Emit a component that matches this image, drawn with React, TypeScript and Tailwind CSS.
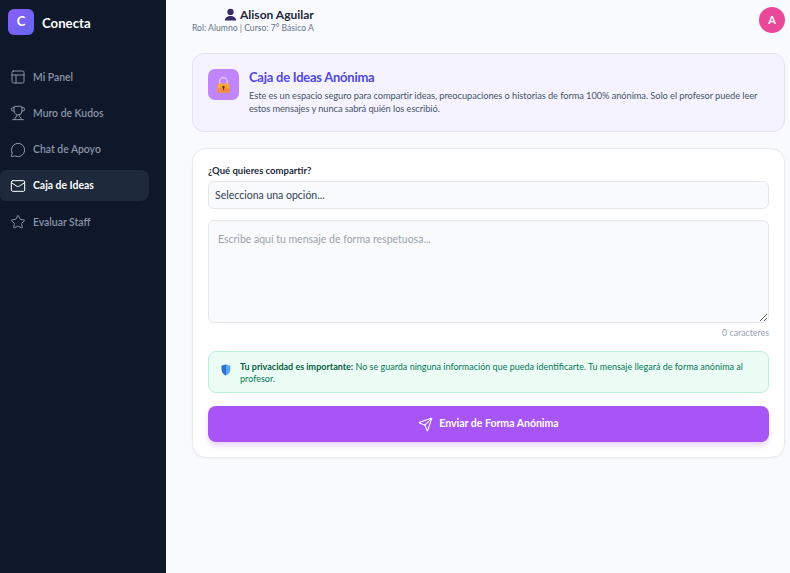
import React from 'react';
import { PanelsTopLeft, Trophy, MessageCircle, Mail, Star, Send } from 'lucide-react';

// --- DATA ---
const navItems = [
  { icon: PanelsTopLeft, label: 'Mi Panel' },
  { icon: Trophy, label: 'Muro de Kudos' },
  { icon: MessageCircle, label: 'Chat de Apoyo' },
  { icon: Mail, label: 'Caja de Ideas', active: true },
  { icon: Star, label: 'Evaluar Staff' },
];

// --- SMALL DRAWINGS (emoji look-alikes) ---
const UserGlyph = () => (
  <svg viewBox="0 0 14 14" className="w-[13px] h-[13px] shrink-0">
    <circle cx="7" cy="4.2" r="3.4" fill="#3b2a6b" />
    <path d="M1 13.5c0-3.4 2.6-5 6-5s6 1.6 6 5z" fill="#3b2a6b" />
  </svg>
);

const LockGlyph = () => (
  <svg viewBox="0 0 16 18" className="w-[15px] h-[17px]">
    <path d="M4 9V5.6a4 4 0 0 1 8 0V9" fill="none" stroke="#d9c8ef" strokeWidth="1.6" />
    <rect x="1.500" y="8" width="13" height="9.500" rx="1.600" fill="#f9a63c" />
    <rect x="1.500" y="13" width="13" height="4.500" rx="1.600" fill="#f08a3e" />
    <circle cx="8" cy="11.600" r="1.300" fill="#5b3a1c" />
    <rect x="7.400" y="11.600" width="1.200" height="3.200" fill="#5b3a1c" />
  </svg>
);

const ShieldGlyph = () => (
  <svg viewBox="0 0 12 14" className="w-[10px] h-[12px] shrink-0 mb-[5px]">
    <path d="M6 .5 11.2 2v4.800c0 3.200-2.300 5.400-5.200 6.700C3.100 12.200.8 10 .8 6.800V2z" fill="#58a6f5" />
    <path d="M6 .5 .8 2v4.800C.8 10 3.100 12.200 6 13.500z" fill="#2f6fd0" />
  </svg>
);

const Sidebar: React.FC = () => (
  <aside className="w-[166px] shrink-0 bg-[#0f172a] flex flex-col">
    <div className="flex gap-[8px] pl-[8px] pt-[9px] h-[61.5px] items-start">
      <div className="w-[26px] h-[26px] rounded-[6px] bg-gradient-to-br from-[#8b5cf6] to-[#6366f1] flex items-center justify-center text-white text-[13px] font-bold">
        C
      </div>
      <span className="text-white text-[13.2px] font-bold mt-[5px] leading-[18px]">Conecta</span>
    </div>
    <nav className="flex flex-col gap-[5.25px] pr-[17px]">
      {navItems.map((item) => {
        const Icon = item.icon;
        return (
          <div
            key={item.label}
            className={`h-[31px] flex items-center gap-[7px] pl-[10px] rounded-r-[8px] rounded-l-[6px] ${
              item.active ? 'bg-[#1e293b] text-white font-bold' : 'text-[#8b95a7] font-semibold'
            }`}
          >
            <Icon className="w-[16px] h-[16px] shrink-0" strokeWidth={1.5} />
            <span className="text-[10.4px] pt-[1px]">{item.label}</span>
          </div>
        );
      })}
    </nav>
  </aside>
);

const Header: React.FC = () => (
  <header className="h-[53px] flex justify-between pl-[26px] pr-[5px] pt-[7px]">
    <div className="flex flex-col items-end self-start">
      <div className="flex items-center gap-[3px] h-[15px]">
        <UserGlyph />
        <span className="text-[#1e293b] text-[12px] font-bold">Alison Aguilar</span>
      </div>
      <span className="text-[#64748b] text-[8.65px] leading-[12px]">Rol: Alumno | Curso: 7° Básico A</span>
    </div>
    <div className="w-[26px] h-[26px] rounded-full bg-[#ec4899] text-white text-[11px] font-bold flex items-center justify-center">
      A
    </div>
  </header>
);

const IntroCard: React.FC = () => (
  <section className="h-[79px] rounded-[12px] border border-[#e4e2fb] bg-[#f5f3ff] flex gap-[10px] pl-[15px] pr-[12px] pt-[15px]">
    <div className="w-[31px] h-[31px] rounded-[7px] bg-[#c084fc] flex items-center justify-center shrink-0">
      <LockGlyph />
    </div>
    <div>
      <h2 className="text-[#4f46e5] text-[13px] font-bold leading-[16px] mb-[4px] tracking-[-0.25px]">Caja de Ideas Anónima</h2>
      <p className="text-[#475569] text-[9.3px] leading-[13px] tracking-[-0.08px]">
        Este es un espacio seguro para compartir ideas, preocupaciones o historias de forma 100% anónima. Solo el profesor puede leer estos mensajes y nunca sabrá quién los escribió.
      </p>
    </div>
  </section>
);

const FormCard: React.FC = () => (
  <section className="mt-[16px] h-[310px] rounded-[14px] border border-[#e8eaee] bg-white shadow-[0_1px_2px_rgba(0,0,0,0.03)] px-[15px] pt-[16px]">
    <label className="block text-[#1e293b] text-[9.5px] font-bold leading-[12px] mb-[4px]">¿Qué quieres compartir?</label>
    <div className="h-[28px] rounded-[6px] border border-[#e5e7eb] bg-[#f8fafc] flex items-center pl-[6px] pt-[1px] text-[#334155] text-[10.5px]">
      Selecciona una opción...
    </div>
    <textarea
      readOnly
      placeholder="Escribe aquí tu mensaje de forma respetuosa..."
      className="block w-full mt-[11px] h-[103px] rounded-[6px] border border-[#e5e7eb] bg-[#f8fafc] px-[9px] py-[11px] text-[10.5px] leading-[14px] placeholder:text-[#9ca3af] outline-none"
    />
    <div className="text-right text-[#94a3b8] text-[8.8px] leading-[12px] mt-[4px]">0 caracteres</div>
    <div className="mt-[12px] h-[42px] rounded-[8px] border border-[#bbf0d6] bg-[#ecfdf5] flex items-center gap-[9px] pl-[12px] pr-[16px]">
      <ShieldGlyph />
      <p className="text-[#047857] text-[9px] leading-[12px] pt-[1px]">
        <strong className="font-bold text-[#065f46]">Tu privacidad es importante:</strong> No se guarda ninguna información que pueda identificarte. Tu mensaje llegará de forma anónima al profesor.
      </p>
    </div>
    <button className="mt-[13px] w-full h-[36px] rounded-[8px] bg-[#a855f7] text-white text-[10.5px] font-bold flex items-center justify-center gap-[6px] shadow-md shadow-purple-200">
      <Send className="w-[15px] h-[15px]" strokeWidth={1.75} />
      Enviar de Forma Anónima
    </button>
  </section>
);

// --- MAIN ---
export default function App() {
  return (
    <div className="w-[790px] h-[573px] flex overflow-hidden bg-[#f9fafd] font-['Lato',sans-serif]">
      <Sidebar />
      <main className="flex-1 min-w-0 flex flex-col">
        <Header />
        <div className="pl-[26px] pr-[5px]">
          <IntroCard />
          <FormCard />
        </div>
      </main>
    </div>
  );
}
